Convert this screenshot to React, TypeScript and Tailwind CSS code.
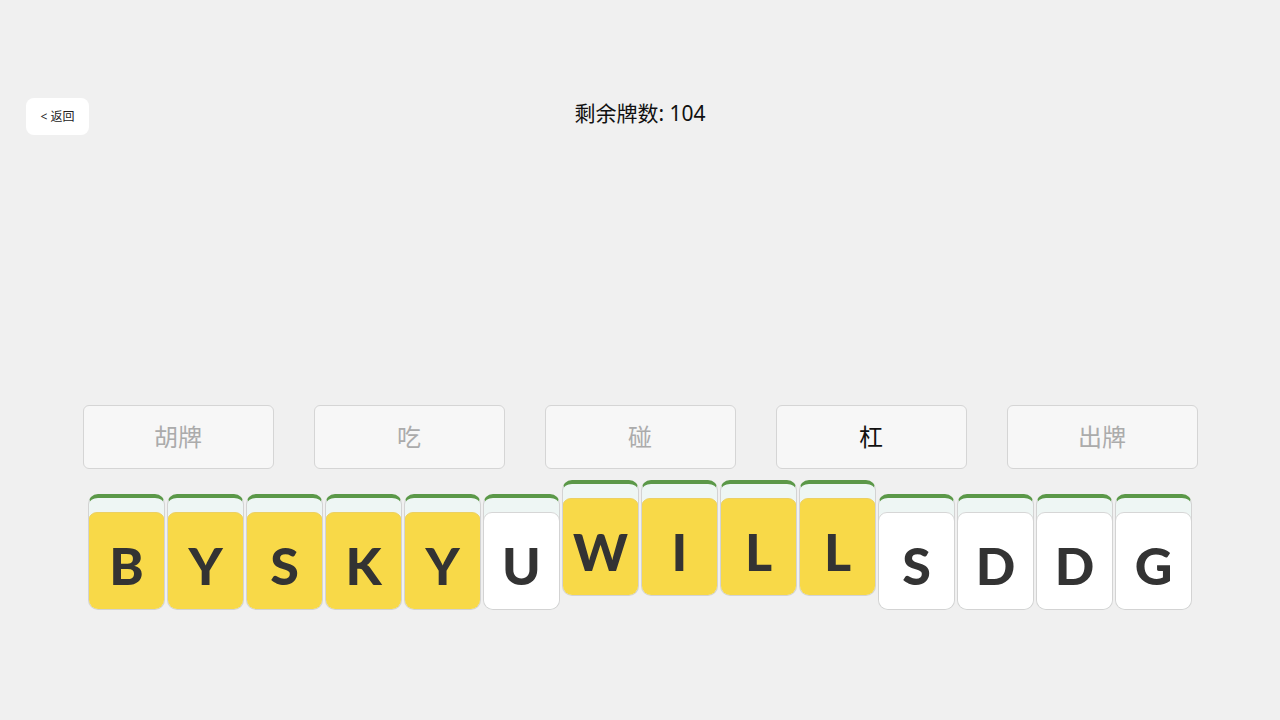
import React from 'react';

const FONT = { fontFamily: '"Noto Sans", "Noto Sans CJK SC", sans-serif' };
const TILE_FONT = { fontFamily: 'Lato, "Open Sans", sans-serif' };

const actions = [
  { label: '胡牌', enabled: false },
  { label: '吃', enabled: false },
  { label: '碰', enabled: false },
  { label: '杠', enabled: true },
  { label: '出牌', enabled: false },
];

const hand = [
  { ch: 'B', yellow: true, up: false },
  { ch: 'Y', yellow: true, up: false },
  { ch: 'S', yellow: true, up: false },
  { ch: 'K', yellow: true, up: false },
  { ch: 'Y', yellow: true, up: false },
  { ch: 'U', yellow: false, up: false },
  { ch: 'W', yellow: true, up: true },
  { ch: 'I', yellow: true, up: true },
  { ch: 'L', yellow: true, up: true },
  { ch: 'L', yellow: true, up: true },
  { ch: 'S', yellow: false, up: false },
  { ch: 'D', yellow: false, up: false },
  { ch: 'D', yellow: false, up: false },
  { ch: 'G', yellow: false, up: false },
];

function Tile({ ch, yellow, up }: { ch: string; yellow: boolean; up: boolean }) {
  return (
    <div
      className={`w-[77px] h-[116px] flex flex-col rounded-[10px] border border-[#d3d3d3] border-t-[4px] border-t-[#5b9848] bg-[#eef6f4] overflow-hidden ${
        up ? 'mb-[14px]' : ''
      }`}
    >
      <div className="h-[14px] shrink-0" />
      <div
        className={`flex-1 -mx-px -mb-px rounded-[9px] border flex items-center justify-center pt-[8px] ${
          yellow ? 'bg-[#f8d948] border-[#ecd062]' : 'bg-white border-[#d6d6d6]'
        }`}
      >
        <span className="text-[52px] font-black leading-none text-[#333333]" style={TILE_FONT}>
          {ch}
        </span>
      </div>
    </div>
  );
}

export default function App() {
  return (
    <div className="w-full min-h-[720px] bg-[#f0f0f0] flex flex-col" style={FONT}>
      <div className="grid grid-cols-[1fr_auto_1fr] items-start pt-[98px] px-[26px]">
        <div>
          <button className="w-[63px] h-[37px] bg-white rounded-lg text-[12px] text-[#222] flex items-center justify-center">
            &lt; 返回
          </button>
        </div>
        <div className="text-[21px] leading-[30px] text-[#111] text-center">剩余牌数: 104</div>
        <div />
      </div>

      <div className="flex justify-center gap-[40px] mt-[270px]">
        {actions.map((a) => (
          <button
            key={a.label}
            className={`w-[191px] h-[64px] rounded-md border border-[#d5d5d5] bg-[#f7f7f7] text-[24px] ${
              a.enabled ? 'text-[#111]' : 'text-[#ababab]'
            }`}
          >
            {a.label}
          </button>
        ))}
      </div>

      <div className="flex justify-center items-end gap-[2px] mt-[11px] h-[130px]">
        {hand.map((t, i) => (
          <Tile key={i} {...t} />
        ))}
      </div>
    </div>
  );
}
